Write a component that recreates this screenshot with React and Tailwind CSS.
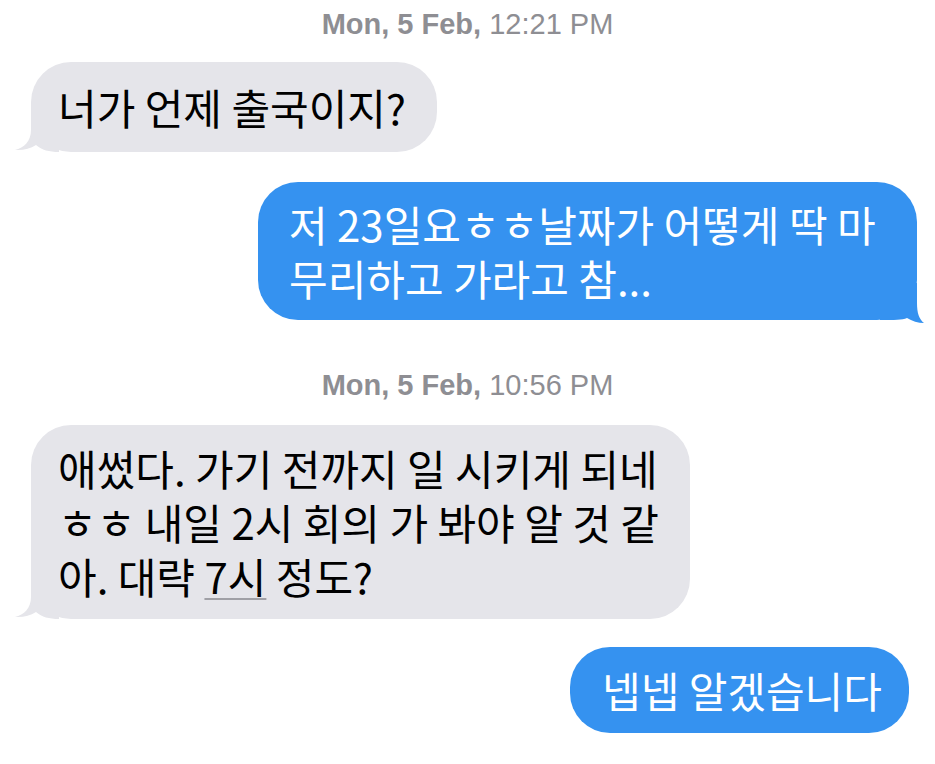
import React from 'react'

const KR = "font-['Noto_Sans_CJK_KR',sans-serif]"

// iOS style tails, drawn at the bottom corner of a bubble
function TailLeft({ color }) {
  return (
    <svg
      className="absolute left-[-16px] bottom-0"
      width="44"
      height="40"
      viewBox="0 0 44 40"
    >
      <path
        d="M16 0 L16 18 C16 29 9 36 0 38 C8 38.5 15 37 21 33 C27 38 34 40 44 40 L44 0 Z"
        fill={color}
      />
    </svg>
  )
}

function TailRight({ color }) {
  return (
    <svg
      className="absolute right-[-7px] bottom-[-3px]"
      width="44"
      height="40"
      viewBox="0 0 44 40"
    >
      <path
        d="M37 0 L37 20 C37 30 39 36 44 40 C38 40 32 38 27 35 C22 37 15 37 0 37 L0 0 Z"
        fill={color}
      />
    </svg>
  )
}

function Stamp({ day, time, className }) {
  return (
    <div
      className={`h-[32px] text-center text-[29px] leading-[32px] text-[#8e8e93] font-['Liberation_Sans',Arial,sans-serif] ${className}`}
    >
      <span className="font-bold">{day}</span> {time}
    </div>
  )
}

export default function App() {
  return (
    <div className="w-[935px] h-[764px] bg-white flex flex-col overflow-hidden">
      <Stamp day="Mon, 5 Feb," time="12:21 PM" className="mt-[8px]" />

      {/* received */}
      <div
        className={`relative mt-[22px] ml-[31px] w-[406px] rounded-[40px] bg-[#e5e5ea] pl-[27px] py-[18px] text-[42px] leading-[54px] text-black whitespace-nowrap ${KR}`}
      >
        <TailLeft color="#e5e5ea" />
        <span className="relative">너가 언제 출국이지?</span>
      </div>

      {/* sent */}
      <div
        className={`relative self-end mt-[30px] mr-[18px] w-[659px] rounded-[40px] bg-[#3592f0] pl-[31px] py-[15px] text-[42px] leading-[54px] text-white whitespace-nowrap ${KR}`}
      >
        <TailRight color="#3592f0" />
        <span className="relative">
          저 23일요ㅎㅎ날짜가 어떻게 딱 마
          <br />
          무리하고 가라고 참...
        </span>
      </div>

      <Stamp day="Mon, 5 Feb," time="10:56 PM" className="mt-[49px]" />

      <div
        className={`relative mt-[24px] ml-[31px] w-[659px] rounded-[40px] bg-[#e5e5ea] pl-[27px] py-[16px] text-[42px] leading-[54px] text-black whitespace-nowrap ${KR}`}
      >
        <TailLeft color="#e5e5ea" />
        <span className="relative">
          애썼다. 가기 전까지 일 시키게 되네
          <br />
          ㅎㅎ 내일 2시 회의 가 봐야 알 것 같
          <br />
          아. 대략{' '}
          <span className="underline decoration-[#a0a0a6] decoration-2 underline-offset-[4px]">7시</span>{' '}
          정도?
        </span>
      </div>

      <div
        className={`self-end mt-[28px] mr-[26px] w-[339px] rounded-[40px] bg-[#3592f0] pl-[32px] py-[16px] text-[42px] leading-[54px] text-white whitespace-nowrap ${KR}`}
      >
        넵넵 알겠습니다
      </div>
    </div>
  )
}
